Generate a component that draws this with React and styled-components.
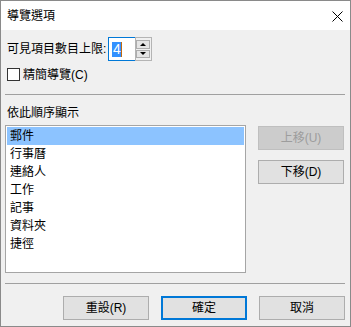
import React from 'react';
import styled, { createGlobalStyle } from 'styled-components';

const GlobalStyle = createGlobalStyle`
  html, body {
    margin: 0;
    padding: 0;
    background: #ffffff;
  }
  * {
    box-sizing: border-box;
  }
`;

const FONT = `"Liberation Sans", "Noto Sans CJK TC", sans-serif`;

const Window = styled.div`
  width: 351px;
  height: 327px;
  border: 1px solid #8a8a8a;
  display: flex;
  flex-direction: column;
  font-family: ${FONT};
  font-size: 12px;
  color: #000;
  overflow: hidden;
`;

const TitleBar = styled.div`
  height: 29px;
  background: #ffffff;
  display: flex;
  align-items: center;
  justify-content: space-between;
  padding: 0 7px 0 6px;
  flex-shrink: 0;
`;

const Title = styled.span`
  line-height: 16px;
  margin-top: 1px;
`;

const CloseIcon = styled.svg`
  width: 11px;
  height: 11px;
  margin-top: 1px;
`;

const Body = styled.div`
  flex: 1;
  background: #f0f0f0;
  padding: 0 5px 0 4px;
  display: flex;
  flex-direction: column;
`;

const LimitRow = styled.div`
  display: flex;
  align-items: center;
  height: 24px;
  margin-top: 7px;
`;

const LimitLabel = styled.span`
  width: 103px;
  padding-left: 2px;
  line-height: 16px;
  white-space: nowrap;
`;

const Spin = styled.div`
  display: flex;
  height: 24px;
`;

const SpinText = styled.div`
  width: 27px;
  height: 24px;
  border: 1px solid #0078d7;
  border-right: none;
  background: #ffffff;
  display: flex;
  align-items: center;
  padding-left: 3px;
`;

const Selected = styled.span`
  background: #3391ff;
  color: #ffffff;
  font-size: 14px;
  line-height: 15px;
  height: 15px;
  padding: 0 0 0 1px;
  border-right: 1px solid #c06a10;
`;

const SpinButtons = styled.div`
  width: 17px;
  height: 24px;
  border: 1px solid #b4b4b4;
  background: #f0f0f0;
  display: flex;
  flex-direction: column;
  gap: 1px;
  padding: 2px 1px 2px 0;
`;

const SpinButton = styled.div`
  flex: 1;
  border: 1px solid #adadad;
  background: #e5e5e5;
  display: flex;
  align-items: center;
  justify-content: center;
`;

const Arrow = styled.span`
  width: 0;
  height: 0;
  border-left: 3px solid transparent;
  border-right: 3px solid transparent;
  ${props => props.up
    ? 'border-bottom: 3px solid #000;'
    : 'border-top: 3px solid #000;'}
`;

const CheckRow = styled.label`
  display: flex;
  align-items: center;
  height: 13px;
  margin-top: 7px;
  padding-left: 2px;
`;

const CheckBox = styled.span`
  width: 13px;
  height: 13px;
  border: 1px solid #333333;
  background: #ffffff;
  flex-shrink: 0;
`;

const CheckLabel = styled.span`
  margin-left: 3px;
  line-height: 16px;
`;

const Separator = styled.div`
  height: 1px;
  background: #a0a0a0;
  margin-top: ${props => props.top}px;
  flex-shrink: 0;
`;

const SectionLabel = styled.div`
  margin-top: 10px;
  padding-left: 2px;
  line-height: 16px;
  height: 16px;
`;

const ListRow = styled.div`
  display: flex;
  margin-top: 4px;
  gap: 12px;
`;

const ListBox = styled.div`
  width: 241px;
  height: 148px;
  border: 1px solid #a5a5a5;
  background: #ffffff;
  padding: 1px 1px 0 1px;
`;

const ListItem = styled.div`
  height: 18px;
  line-height: 18px;
  padding-left: 3px;
  background: ${props => (props.selected ? '#8cc3ff' : 'transparent')};
`;

const SideButtons = styled.div`
  display: flex;
  flex-direction: column;
  gap: 10px;
  padding-top: 1px;
`;

const Button = styled.button`
  width: 86px;
  height: 24px;
  margin: 0;
  padding: 0;
  font-family: ${FONT};
  font-size: 12px;
  line-height: 16px;
  color: ${props => (props.disabled ? '#9d9d9d' : '#000000')};
  background: ${props => (props.disabled ? '#cccccc' : '#e1e1e1')};
  border: ${props =>
    props.primary ? '2px solid #0078d7' : props.disabled ? '1px solid #bfbfbf' : '1px solid #adadad'};
  cursor: default;
`;

const Footer = styled.div`
  display: flex;
  justify-content: flex-end;
  gap: 12px;
  margin-top: 12px;
`;

const items = ['郵件', '行事曆', '連絡人', '工作', '記事', '資料夾', '捷徑'];

export default function App() {
  return (
    <>
      <GlobalStyle />
      <Window>
        <TitleBar>
          <Title>導覽選項</Title>
          <CloseIcon viewBox="0 0 11 11">
            <path d="M0.5 0.5 L10.5 10.5 M10.5 0.5 L0.5 10.5" stroke="#000" strokeWidth="1" fill="none" />
          </CloseIcon>
        </TitleBar>
        <Body>
          <LimitRow>
            <LimitLabel>可見項目數目上限:</LimitLabel>
            <Spin>
              <SpinText>
                <Selected>4</Selected>
              </SpinText>
              <SpinButtons>
                <SpinButton><Arrow up /></SpinButton>
                <SpinButton><Arrow /></SpinButton>
              </SpinButtons>
            </Spin>
          </LimitRow>
          <CheckRow>
            <CheckBox />
            <CheckLabel>精簡導覽(C)</CheckLabel>
          </CheckRow>
          <Separator top={13} />
          <SectionLabel>依此順序顯示</SectionLabel>
          <ListRow>
            <ListBox>
              {items.map((item, i) => (
                <ListItem key={item} selected={i === 0}>{item}</ListItem>
              ))}
            </ListBox>
            <SideButtons>
              <Button disabled>上移(U)</Button>
              <Button>下移(D)</Button>
            </SideButtons>
          </ListRow>
          <Separator top={10} />
          <Footer>
            <Button>重設(R)</Button>
            <Button primary>確定</Button>
            <Button>取消</Button>
          </Footer>
        </Body>
      </Window>
    </>
  );
}
